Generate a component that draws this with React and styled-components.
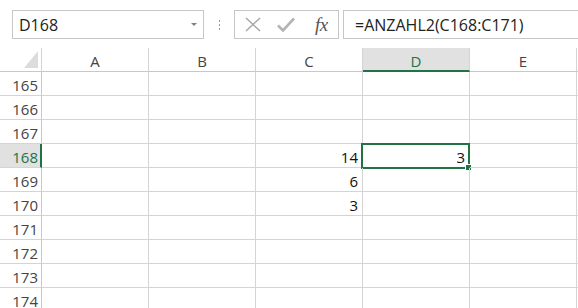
import React from "react";
import styled, { createGlobalStyle } from "styled-components";

const Global = createGlobalStyle`
  html, body { margin: 0; padding: 0; background: #ffffff; }
  body { width: 578px; height: 308px; overflow: hidden; font-family: "Open Sans", "Noto Sans", sans-serif; }
`;

const GREEN = "#217346";
const GRID = "#d4d4d4";

const Page = styled.div`
  width: 578px;
  height: 308px;
  overflow: hidden;
  background: #fff;
`;

const Toolbar = styled.div`
  display: flex;
  align-items: flex-start;
  height: 48px;
  box-sizing: border-box;
  padding: 10px 0 0 12px;
  overflow: hidden;
`;

const NameBox = styled.div`
  box-sizing: border-box;
  width: 192px;
  height: 29px;
  border: 1px solid #c6c6c6;
  display: flex;
  align-items: center;
  justify-content: space-between;
  padding: 0 6px 0 6px;
  font-size: 16px;
  color: #222;
  flex-shrink: 0;
`;

const Caret = styled.span`
  width: 0;
  height: 0;
  border-left: 3px solid transparent;
  border-right: 3px solid transparent;
  border-top: 3px solid #808080;
  margin-right: 0px;
`;

const Grip = styled.div`
  width: 30px;
  height: 29px;
  display: flex;
  flex-direction: column;
  align-items: center;
  justify-content: center;
  gap: 2px;
  flex-shrink: 0;
  padding-left: 1px;
  box-sizing: border-box;
`;

const Dot = styled.span`
  width: 1px;
  height: 2px;
  background: #9a9a9a;
`;

const FxBox = styled.div`
  box-sizing: border-box;
  width: 105px;
  height: 29px;
  border: 1px solid #c6c6c6;
  display: flex;
  align-items: center;
  padding-left: 9px;
  gap: 0;
  flex-shrink: 0;
`;

const IconSlot = styled.span`
  display: flex;
  align-items: center;
  justify-content: center;
  width: ${(p) => p.w}px;
  height: 20px;
`;

const FxText = styled.span`
  font-family: "Liberation Serif", "DejaVu Serif", serif;
  font-style: italic;
  font-size: 19px;
  color: #555;
  letter-spacing: -0.5px;
  margin-left: 2px;
  line-height: 1;
`;

const Formula = styled.div`
  box-sizing: border-box;
  margin-left: 4px;
  width: 300px;
  height: 29px;
  border: 1px solid #c6c6c6;
  display: flex;
  align-items: center;
  padding-left: 11px;
  font-size: 16px;
  color: #222;
  flex-shrink: 0;
  white-space: nowrap;
`;

const Sheet = styled.div`
  display: grid;
  grid-template-columns: 42px repeat(5, 107px) 107px;
  grid-auto-rows: 24px;
  width: 578px;
  overflow: hidden;
`;

const Corner = styled.div`
  box-sizing: border-box;
  position: relative;
  border-right: 1px solid ${GRID};
  border-bottom: 1px solid #c8c8c8;
  display: flex;
  align-items: flex-end;
  justify-content: flex-end;
  padding: 0 3px 3px 0;
`;

const Triangle = styled.span`
  width: 0;
  height: 0;
  border-left: 14px solid transparent;
  border-bottom: 17px solid #dcdcdc;
`;

const ColHead = styled.div`
  box-sizing: border-box;
  border-right: 1px solid ${GRID};
  border-bottom: ${(p) => (p.$sel ? `2px solid ${GREEN}` : "1px solid #c8c8c8")};
  background: ${(p) => (p.$sel ? "#e1e1e1" : "#fff")};
  color: ${(p) => (p.$sel ? GREEN : "#444")};
  font-size: 15px;
  display: flex;
  align-items: center;
  justify-content: center;
  padding-top: ${(p) => (p.$sel ? 3 : 2)}px;
`;

const RowHead = styled.div`
  box-sizing: border-box;
  border-right: ${(p) => (p.$sel ? `2px solid ${GREEN}` : `1px solid #c8c8c8`)};
  border-bottom: 1px solid ${GRID};
  background: ${(p) => (p.$sel ? "#e1e1e1" : "#fff")};
  color: ${(p) => (p.$sel ? GREEN : "#444")};
  font-size: 15px;
  display: flex;
  align-items: center;
  justify-content: flex-end;
  padding: 2px ${(p) => (p.$sel ? 2 : 3)}px 0 0;
`;

const Cell = styled.div`
  box-sizing: border-box;
  position: relative;
  border-right: 1px solid ${GRID};
  border-bottom: 1px solid ${GRID};
  display: flex;
  align-items: center;
  justify-content: flex-end;
  padding: 2px 4px 0 0;
  font-size: 15px;
  color: #111;
`;

const Selection = styled.div`
  position: absolute;
  left: -2px;
  top: -1px;
  width: 109px;
  height: 26px;
  box-sizing: border-box;
  border: 2px solid ${GREEN};
  pointer-events: none;
`;

const Handle = styled.span`
  position: absolute;
  right: -4px;
  bottom: -4px;
  width: 5px;
  height: 5px;
  background: ${GREEN};
  border: 1px solid #fff;
`;

const columns = ["A", "B", "C", "D", "E", ""];
const rows = [
  { n: 165 },
  { n: 166 },
  { n: 167 },
  { n: 168, C: "14", D: "3" },
  { n: 169, C: "6" },
  { n: 170, C: "3" },
  { n: 171 },
  { n: 172 },
  { n: 173 },
  { n: 174 },
];

export default function App() {
  return (
    <Page>
      <Global />
      <Toolbar>
        <NameBox>
          <span>D168</span>
          <Caret />
        </NameBox>
        <Grip>
          <Dot />
          <Dot />
          <Dot />
        </Grip>
        <FxBox>
          <IconSlot w={17}>
            <svg width="16" height="15" viewBox="0 0 16 15">
              <path d="M1 1 L15 14 M15 1 L1 14" stroke="#a8a8a8" strokeWidth="1.5" fill="none" />
            </svg>
          </IconSlot>
          <IconSlot w={16} />
          <IconSlot w={18}>
            <svg width="18" height="15" viewBox="0 0 18 15">
              <path d="M1 8.5 L6 13.5 L17 1.5" stroke="#b4b4b4" strokeWidth="2.6" fill="none" />
            </svg>
          </IconSlot>
          <IconSlot w={18} />
          <FxText>fx</FxText>
        </FxBox>
        <Formula>=ANZAHL2(C168:C171)</Formula>
      </Toolbar>
      <Sheet>
        <Corner>
          <Triangle />
        </Corner>
        {columns.map((c, i) => (
          <ColHead key={i} $sel={c === "D"}>
            {c}
          </ColHead>
        ))}
        {rows.map((r) => (
          <React.Fragment key={r.n}>
            <RowHead $sel={r.n === 168}>{r.n}</RowHead>
            {columns.map((c, i) => (
              <Cell key={i}>
                {r[c] || ""}
                {r.n === 168 && c === "D" && (
                  <Selection>
                    <Handle />
                  </Selection>
                )}
              </Cell>
            ))}
          </React.Fragment>
        ))}
      </Sheet>
    </Page>
  );
}
